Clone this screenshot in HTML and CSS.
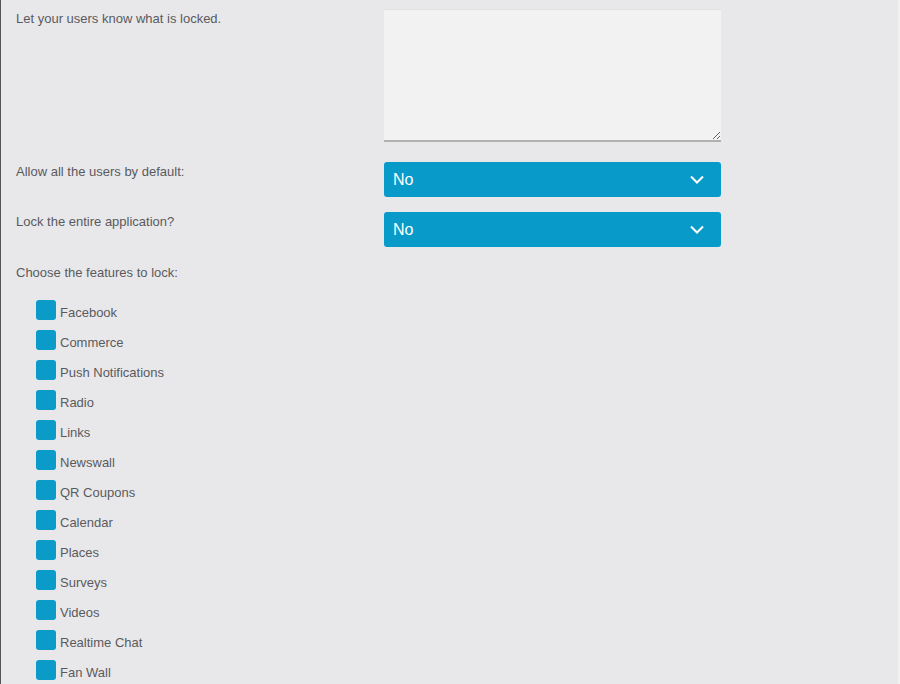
FILE: index.html
```html
<!DOCTYPE html>
<html>
<head>
	<meta charset="UTF-8"/>
	<title>Lock settings</title>
	<link rel="stylesheet" href="styles.css">
</head>
<body>
	<form class="lock-form">
		<div class="form-row">
			<label class="form-label">Let your users know what is locked.</label>
			<textarea class="form-textarea"></textarea>
		</div>
		<div class="form-row form-row-select">
			<label class="form-label">Allow all the users by default:</label>
			<div class="form-select">
				<span>No</span>
				<svg class="chevron" width="14" height="9" viewBox="0 0 14 9"><path d="M1 1.5 L7 7.5 L13 1.5" fill="none" stroke="#fff" stroke-width="2"/></svg>
			</div>
		</div>
		<div class="form-row form-row-select">
			<label class="form-label">Lock the entire application?</label>
			<div class="form-select">
				<span>No</span>
				<svg class="chevron" width="14" height="9" viewBox="0 0 14 9"><path d="M1 1.5 L7 7.5 L13 1.5" fill="none" stroke="#fff" stroke-width="2"/></svg>
			</div>
		</div>
		<div class="form-label features-title">Choose the features to lock:</div>
		<ul class="features">
			<li><span class="check"></span>Facebook</li>
			<li><span class="check"></span>Commerce</li>
			<li><span class="check"></span>Push Notifications</li>
			<li><span class="check"></span>Radio</li>
			<li><span class="check"></span>Links</li>
			<li><span class="check"></span>Newswall</li>
			<li><span class="check"></span>QR Coupons</li>
			<li><span class="check"></span>Calendar</li>
			<li><span class="check"></span>Places</li>
			<li><span class="check"></span>Surveys</li>
			<li><span class="check"></span>Videos</li>
			<li><span class="check"></span>Realtime Chat</li>
			<li><span class="check"></span>Fan Wall</li>
		</ul>
	</form>
</body>
</html>
```

FILE: styles.css
```css
html, body {
	margin: 0;
	height: 100%;
}
body {
	background-color: #e8e8ea;
	border-left: 1px solid #555;
	border-right: 2px solid #f1f1f2;
	box-sizing: border-box;
	font: normal 13px "Liberation Sans", Arial, sans-serif;
	color: #5a5a5e;
	overflow: hidden;
}
.lock-form {
	padding: 9px 0 0 15px;
}
.form-row {
	display: grid;
	grid-template-columns: 368px 337px;
	margin-bottom: 20px;
}
.form-row-select {
	margin-bottom: 15px;
}
.form-label {
	display: block;
	line-height: 16px;
	padding-top: 2px;
}
.form-textarea {
	height: 133px;
	box-sizing: border-box;
	background: #f2f2f2;
	border: none;
	border-top: 1px solid #e2e2e3;
	border-bottom: 2px solid #b0b0b0;
	margin: 0;
	padding: 6px;
	resize: vertical;
	font: inherit;
}
.form-select {
	height: 35px;
	background: #089bc9;
	border-radius: 3px;
	color: #fff;
	font-size: 16px;
	display: flex;
	align-items: center;
	justify-content: space-between;
	padding: 0 17px 0 9px;
}
.chevron {
	display: block;
}
.features-title {
	padding-top: 3px;
}
.features {
	list-style: none;
	margin: 0;
	padding: 16px 0 0 20px;
}
.features li {
	display: flex;
	align-items: center;
	height: 30px;
}
.check {
	width: 20px;
	height: 20px;
	background: #0a9bc9;
	border-radius: 3px;
	margin-right: 4px;
	position: relative;
	top: -2px;
}
```
